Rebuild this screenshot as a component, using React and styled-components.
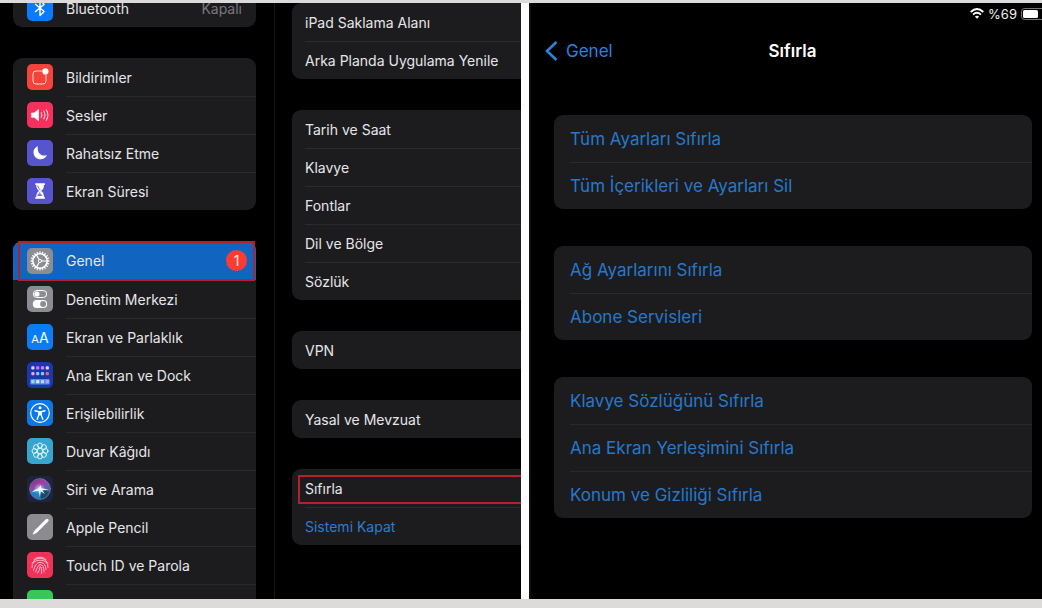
import React from "react";
import styled, { createGlobalStyle, css } from "styled-components";

const Global = createGlobalStyle`
  * { box-sizing: border-box; }
  body { margin: 0; background: #dcdbd9; }
  ul { list-style: none; margin: 0; padding: 0; }
  h1, p { margin: 0; }
`;

const Page = styled.div`
  height: 100vh;
  padding: 3px 0 9px;
  background: #dcdbd9;
  font-family: Inter, "Liberation Sans", sans-serif;
  font-size: 14px;
  color: #e6e6e8;
`;

const Screens = styled.div`
  height: 100%;
  display: grid;
  grid-template-columns: 521fr 513fr;
  gap: 8px;
  background: #fff;
`;

const SettingsScreen = styled.div`
  min-width: 0;
  min-height: 0;
  display: flex;
  overflow: hidden;
  background: #000;
`;

const Sidebar = styled.nav`
  flex: 0 0 275px;
  min-height: 0;
  overflow: hidden;
  padding: 0 18px 0 13px;
  border-right: 1px solid #161617;
`;

const SidebarGroups = styled.div`
  margin-top: -14px;
  display: grid;
  gap: 31px;
`;

const DetailPane = styled.main`
  flex: 1;
  min-width: 0;
  padding-left: 17px;
  display: grid;
  align-content: start;
  gap: 31px;
`;

const ResetScreen = styled.section`
  min-width: 0;
  min-height: 0;
  overflow: hidden;
  background: #000;
  border-left: 2px solid #101011;
`;

const Group = styled.ul`
  background: #1c1c1e;
  border-radius: ${(p) => (p.$cut ? "9px 0 0 9px" : "9px")};
`;

const Item = styled.li`
  position: relative;
  &:not(:first-child)::before {
    content: "";
    position: absolute;
    top: 0;
    right: 0;
    left: ${(p) => p.$line}px;
    height: 1px;
    background: ${(p) => (p.$noLine ? "transparent" : "#2b2b2d")};
  }
`;

const RowLink = styled.a`
  display: flex;
  align-items: center;
  height: ${(p) => p.$height || 38}px;
  padding: 0 14px 0 ${(p) => (p.$plain ? 13 : 14)}px;
  gap: 13px;
  color: ${(p) => (p.$blue ? "#2b7ccf" : "inherit")};
  text-decoration: none;
  white-space: nowrap;
  ${(p) =>
    p.$selected &&
    css`
      background: #1165c0;
      border-radius: 9px 9px 0 0;
      padding-right: 9px;
    `}
`;

const ResetLink = styled(RowLink)`
  height: 47px;
  padding: 0 16px;
  font-size: 17px;
  color: #2678cb;
`;

const Label = styled.span`
  flex: 1;
`;

const Value = styled.span`
  color: #77777b;
`;

const Badge = styled.span`
  width: 21px;
  height: 21px;
  border-radius: 50%;
  background: #fb3c34;
  color: #fbe3e1;
  text-align: center;
  line-height: 21px;
`;

const Marker = styled.span`
  position: absolute;
  pointer-events: none;
  border: 2px solid #b3222c;
  inset: ${(p) => p.$inset};
  ${(p) => p.$open && css`border-right: 0;`}
`;

const Tile = styled.span`
  flex: none;
  width: 26px;
  height: 26px;
  border-radius: 5px;
  overflow: hidden;
  background: ${(p) => p.$color};
  color: #fff;
  display: flex;
  align-items: center;
  justify-content: center;
  svg { display: block; width: 26px; height: 26px; }
`;

const SmallA = styled.span`font-size: 11px;`;
const LargeA = styled.span`font-size: 14px;`;
const Letters = styled.span`
  display: flex;
  align-items: baseline;
`;

const StatusBar = styled.div`
  height: 21px;
  display: flex;
  align-items: center;
  justify-content: flex-end;
  gap: 4px;
  font-size: 13px;
  color: #f2f2f2;
  svg { display: block; }
`;

const TitleBar = styled.header`
  height: 54px;
  display: grid;
  grid-template-columns: 1fr auto 1fr;
  align-items: center;
  padding: 0 2px 0 14px;
  font-size: 17px;
`;

const BackLink = styled.a`
  display: flex;
  align-items: center;
  gap: 8px;
  color: #2b83dc;
  text-decoration: none;
`;

const Title = styled.h1`
  font-size: 17px;
  font-weight: 600;
  color: #fff;
`;

const ResetGroups = styled.div`
  display: grid;
  gap: 37px;
  padding: 37px 10px 0 23px;
`;

const Svg = ({ children }) => (
  <svg viewBox="0 0 26 26" fill="none" stroke="#fff" strokeLinecap="round" strokeLinejoin="round" aria-hidden="true">
    {children}
  </svg>
);

const ring = (n, f) => Array.from({ length: n }, (_, i) => f((i * 2 * Math.PI) / n, i));

const icons = {
  bluetooth: ["#0a7aff", <Svg><path d="M8.5 9.3l8.6 7.2-4.1 4V5.2l4.1 4-8.6 7.4" strokeWidth="1.4" /></Svg>],
  notifications: ["#f4433a", (
    <Svg>
      <path d="M15 7H9Q6 7 6 10v7q0 3 3 3h7q3 0 3-3v-6" strokeWidth="1" stroke="#ffd5d1" />
      <circle cx="18.4" cy="7.4" r="3.1" fill="#fff" stroke="none" />
    </Svg>
  )],
  sounds: ["#f5305c", (
    <Svg>
      <path d="M4.8 11h2.5L11.5 7.5v11.2L7.3 15.3H4.8z" fill="#fff" strokeWidth=".7" />
      <path d="M14.2 10.8q1.2 2.2 0 4.5M16.8 9.2q2.2 3.8 0 7.6M19.3 7.8q3.2 5.2 0 10.4" strokeWidth="1.1" stroke="#ffd0da" />
    </Svg>
  )],
  moon: ["#5755ce", <Svg><path d="M11 6.2C8 7.1 6.3 9.7 6.5 12.7c.3 3.8 3.4 6.7 7.2 6.6 3 0 5.3-1.8 6.2-4.3-5.3 2.2-10.5-2.5-8.9-8.8z" fill="#fff" stroke="none" /></Svg>],
  hourglass: ["#5755ce", (
    <Svg>
      <path d="M8.3 5.3h9.6v1.8h-1q.2 3.9-2.8 6 3 2 2.8 5.8h1v1.8H8.3v-1.8h1q-.2-3.8 2.8-5.8-3-2.1-2.8-6h-1z" fill="#fff" stroke="none" />
      <path d="M10.8 8.1q.5 2.5 2.3 3.8M13.1 14.3q-1.9 1.4-2.3 3.2" stroke="#5755ce" strokeWidth=".9" />
      <path d="M13.1 15l2.5 3h-5z" fill="#7774df" stroke="none" />
    </Svg>
  )],
  gear: ["#8b8d92", (
    <Svg>
      {ring(20, (a, i) => (
        <path key={i} strokeWidth="1.3" d={`M${13 + 7.5 * Math.cos(a)} ${13 + 7.5 * Math.sin(a)}L${13 + 9 * Math.cos(a)} ${13 + 9 * Math.sin(a)}`} />
      ))}
      <circle cx="13" cy="13" r="7.2" strokeWidth="1.5" />
      <circle cx="13" cy="13" r="1.6" strokeWidth="1" />
      <path d="M15 13h5M12 11.3L9.4 6.8M12 14.7l-2.6 4.5" strokeWidth="1.2" />
    </Svg>
  )],
  toggles: ["#8b8d92", (
    <Svg>
      <rect x="6.3" y="4.5" width="13.4" height="7" rx="3.5" strokeWidth="1" />
      <circle cx="10" cy="8" r="2.6" fill="#fff" stroke="none" />
      <rect x="5.8" y="14" width="14.4" height="8" rx="4" fill="#fff" stroke="none" />
      <circle cx="16.1" cy="18" r="3" fill="#8b8d92" stroke="none" />
    </Svg>
  )],
  display: ["#0a7cf5", <Letters aria-hidden="true"><SmallA>A</SmallA><LargeA>A</LargeA></Letters>],
  home: ["#1b37a8", (
    <Svg>
      <g stroke="none">
        {[["#cfd6ff", "#b67bff", "#d47bff", "#c9d8ff"], ["#e5a2e8", "#91bdff", "#77d0f2", "#ef6378"]].map((r, y) =>
          r.map((c, x) => <rect key={`${x}${y}`} x={4.3 + x * 4.8} y={4.3 + y * 5.8} width="3.2" height="3.2" rx=".8" fill={c} />)
        )}
        <rect x="3.3" y="17" width="19.4" height="5.4" rx="1" fill="#5c8bed" />
        {["#9bdaff", "#d4ebff", "#b4d4ff", "#b7a5f1"].map((c, x) => (
          <rect key={c} x={4.3 + x * 4.8} y="18" width="3.2" height="3.2" rx=".8" fill={c} />
        ))}
      </g>
    </Svg>
  )],
  access: ["#0a78e6", (
    <Svg>
      <circle cx="13" cy="13" r="9.3" strokeWidth="1.2" />
      <circle cx="13" cy="7.8" r="1.5" fill="#fff" stroke="none" />
      <path d="M8 10.8l3.8 1h2.4l3.8-1M11.8 11.8v3.3l-1.6 4.2M14.2 11.8v3.3l1.6 4.2M13 11.8v3" strokeWidth="1.4" />
    </Svg>
  )],
  wallpaper: ["#38a5cf", (
    <Svg>
      {ring(8, (a, i) => <circle key={i} cx={13 + 5.5 * Math.cos(a)} cy={13 + 5.5 * Math.sin(a)} r="2.5" strokeWidth="1" stroke="#d9f4ff" />)}
      <circle cx="13" cy="13" r="2.7" strokeWidth="1" stroke="#d9f4ff" />
    </Svg>
  )],
  siri: ["#20233e", (
    <Svg>
      <defs>
        <linearGradient id="siriOrb" x1="0" y1="0" x2=".6" y2="1">
          <stop offset="0" stopColor="#33407f" />
          <stop offset=".35" stopColor="#a83a9c" />
          <stop offset=".6" stopColor="#7c55b4" />
          <stop offset="1" stopColor="#14788c" />
        </linearGradient>
        <radialGradient id="siriGlow">
          <stop offset="0" stopColor="#fff" stopOpacity=".9" />
          <stop offset="1" stopColor="#6fc8ff" stopOpacity="0" />
        </radialGradient>
      </defs>
      <circle cx="13" cy="13" r="10.4" fill="url(#siriOrb)" stroke="#6e7aa4" strokeWidth=".8" />
      <path d="M3.5 15.500Q8 11.500 13 13l-1 9.800Q5 21.500 3.500 15.500z" fill="#1b83c4" stroke="none" />
      <path d="M13 13l9.300 3q-2 5.500-8.300 6.800z" fill="#174c68" stroke="none" />
      <circle cx="12.500" cy="13" r="6" fill="url(#siriGlow)" stroke="none" />
      <path d="M4.500 16.500Q8 12.700 12 12.200L13.500 9l.8 3.200 7.700 1.300-6.800.8 2.800 4-4.300-3.300-.8 6.500-1-6.500Q8 14.500 4.500 16.500z" fill="#eefaff" stroke="none" />
    </Svg>
  )],
  pencil: ["#8b8b90", (
    <Svg>
      <path d="M9.2 17.2L20 6.4" strokeWidth="3.3" />
      <path d="M7.3 16.5L5.5 20.7l4.2-1.8z" fill="#fff" stroke="none" />
    </Svg>
  )],
  touch: ["#f0315a", (
    <Svg>
      <g strokeWidth=".9" stroke="#ffc3d0">
        <path d="M7 7.500q6-5 12 0M5 11.200q3-5.200 8-5.200t8 5.200M5 15.500q-.3-7.300 8-7.300t8 7.300M6.500 18.200q2-7.800 6.500-7.800 5.500 0 6 7M8.500 20q3-7.500 4.500-7.500 4 0 4 7.500M10.700 21q2.700-4 2.300-6.500 2-.2 1.500 7" />
      </g>
    </Svg>
  )],
  face: ["#34c759", null],
};

const sidebar = [
  [{ icon: "bluetooth", label: "Bluetooth", value: "Kapalı" }],
  [
    { icon: "notifications", label: "Bildirimler" },
    { icon: "sounds", label: "Sesler" },
    { icon: "moon", label: "Rahatsız Etme" },
    { icon: "hourglass", label: "Ekran Süresi" },
  ],
  [
    { icon: "gear", label: "Genel", badge: 1, selected: true },
    { icon: "toggles", label: "Denetim Merkezi" },
    { icon: "display", label: "Ekran ve Parlaklık" },
    { icon: "home", label: "Ana Ekran ve Dock" },
    { icon: "access", label: "Erişilebilirlik" },
    { icon: "wallpaper", label: "Duvar Kâğıdı" },
    { icon: "siri", label: "Siri ve Arama" },
    { icon: "pencil", label: "Apple Pencil" },
    { icon: "touch", label: "Touch ID ve Parola" },
    { icon: "face", label: "" },
  ],
];

const general = [
  ["iPad Saklama Alanı", "Arka Planda Uygulama Yenile"],
  ["Tarih ve Saat", "Klavye", "Fontlar", "Dil ve Bölge", "Sözlük"],
  ["VPN"],
  ["Yasal ve Mevzuat"],
  ["Sıfırla", "Sistemi Kapat"],
];

const resets = [
  ["Tüm Ayarları Sıfırla", "Tüm İçerikleri ve Ayarları Sil"],
  ["Ağ Ayarlarını Sıfırla", "Abone Servisleri"],
  ["Klavye Sözlüğünü Sıfırla", "Ana Ekran Yerleşimini Sıfırla", "Konum ve Gizliliği Sıfırla"],
];

function SidebarItem({ item, afterSelected }) {
  const [color, art] = icons[item.icon];
  return (
    <Item $line={53} $noLine={afterSelected}>
      <RowLink href="#" $selected={item.selected} $height={item.selected ? 39 : 38}>
        <Tile $color={color}>{art}</Tile>
        <Label>{item.label}</Label>
        {item.value && <Value>{item.value}</Value>}
        {item.badge && <Badge>{item.badge}</Badge>}
      </RowLink>
      {item.selected && <Marker $inset="0 1px -1px 5px" />}
    </Item>
  );
}

export default function App() {
  return (
    <Page>
      <Global />
      <Screens>
        <SettingsScreen>
          <Sidebar>
            <SidebarGroups>
              {sidebar.map((items, g) => (
                <Group key={g}>
                  {items.map((item, i) => (
                    <SidebarItem key={item.icon} item={item} afterSelected={i > 0 && items[i - 1].selected} />
                  ))}
                </Group>
              ))}
            </SidebarGroups>
          </Sidebar>
          <DetailPane>
            {general.map((items, g) => (
              <Group key={g} $cut>
                {items.map((label) => (
                  <Item key={label} $line={13}>
                    <RowLink href="#" $plain $blue={label === "Sistemi Kapat"}>{label}</RowLink>
                    {label === "Sıfırla" && <Marker $inset="6px 0 3px 6px" $open />}
                  </Item>
                ))}
              </Group>
            ))}
          </DetailPane>
        </SettingsScreen>
        <ResetScreen>
          <StatusBar>
            <svg width="14" height="11" viewBox="0 0 14 11" fill="none" stroke="#fff" strokeWidth="1.9" aria-hidden="true">
              <path d="M.7 4Q7-1.800 13.300 4M3 6.600q4-3.500 8 0" />
              <path d="M7 10.800L4.900 8.600q2.100-1.600 4.200 0z" fill="#fff" stroke="none" />
            </svg>
            <span>%69</span>
            <svg width="21" height="12" viewBox="0 0 21 12" aria-hidden="true">
              <path d="M21 .5H3.500Q.5.500.5 3.500v5q0 3 3 3H21" fill="none" stroke="#77777a" />
              <rect x="2" y="2" width="15" height="8" rx="1.5" fill="#fff" />
            </svg>
          </StatusBar>
          <TitleBar>
            <BackLink href="#">
              <svg width="13" height="20" viewBox="0 0 13 20" fill="none" stroke="#2b83dc" strokeWidth="2.6" aria-hidden="true">
                <path d="M11.500 1L2 10l9.500 9" />
              </svg>
              Genel
            </BackLink>
            <Title>Sıfırla</Title>
          </TitleBar>
          <ResetGroups>
            {resets.map((items, g) => (
              <Group key={g}>
                {items.map((label) => (
                  <Item key={label} $line={16}>
                    <ResetLink href="#">{label}</ResetLink>
                  </Item>
                ))}
              </Group>
            ))}
          </ResetGroups>
        </ResetScreen>
      </Screens>
    </Page>
  );
}
